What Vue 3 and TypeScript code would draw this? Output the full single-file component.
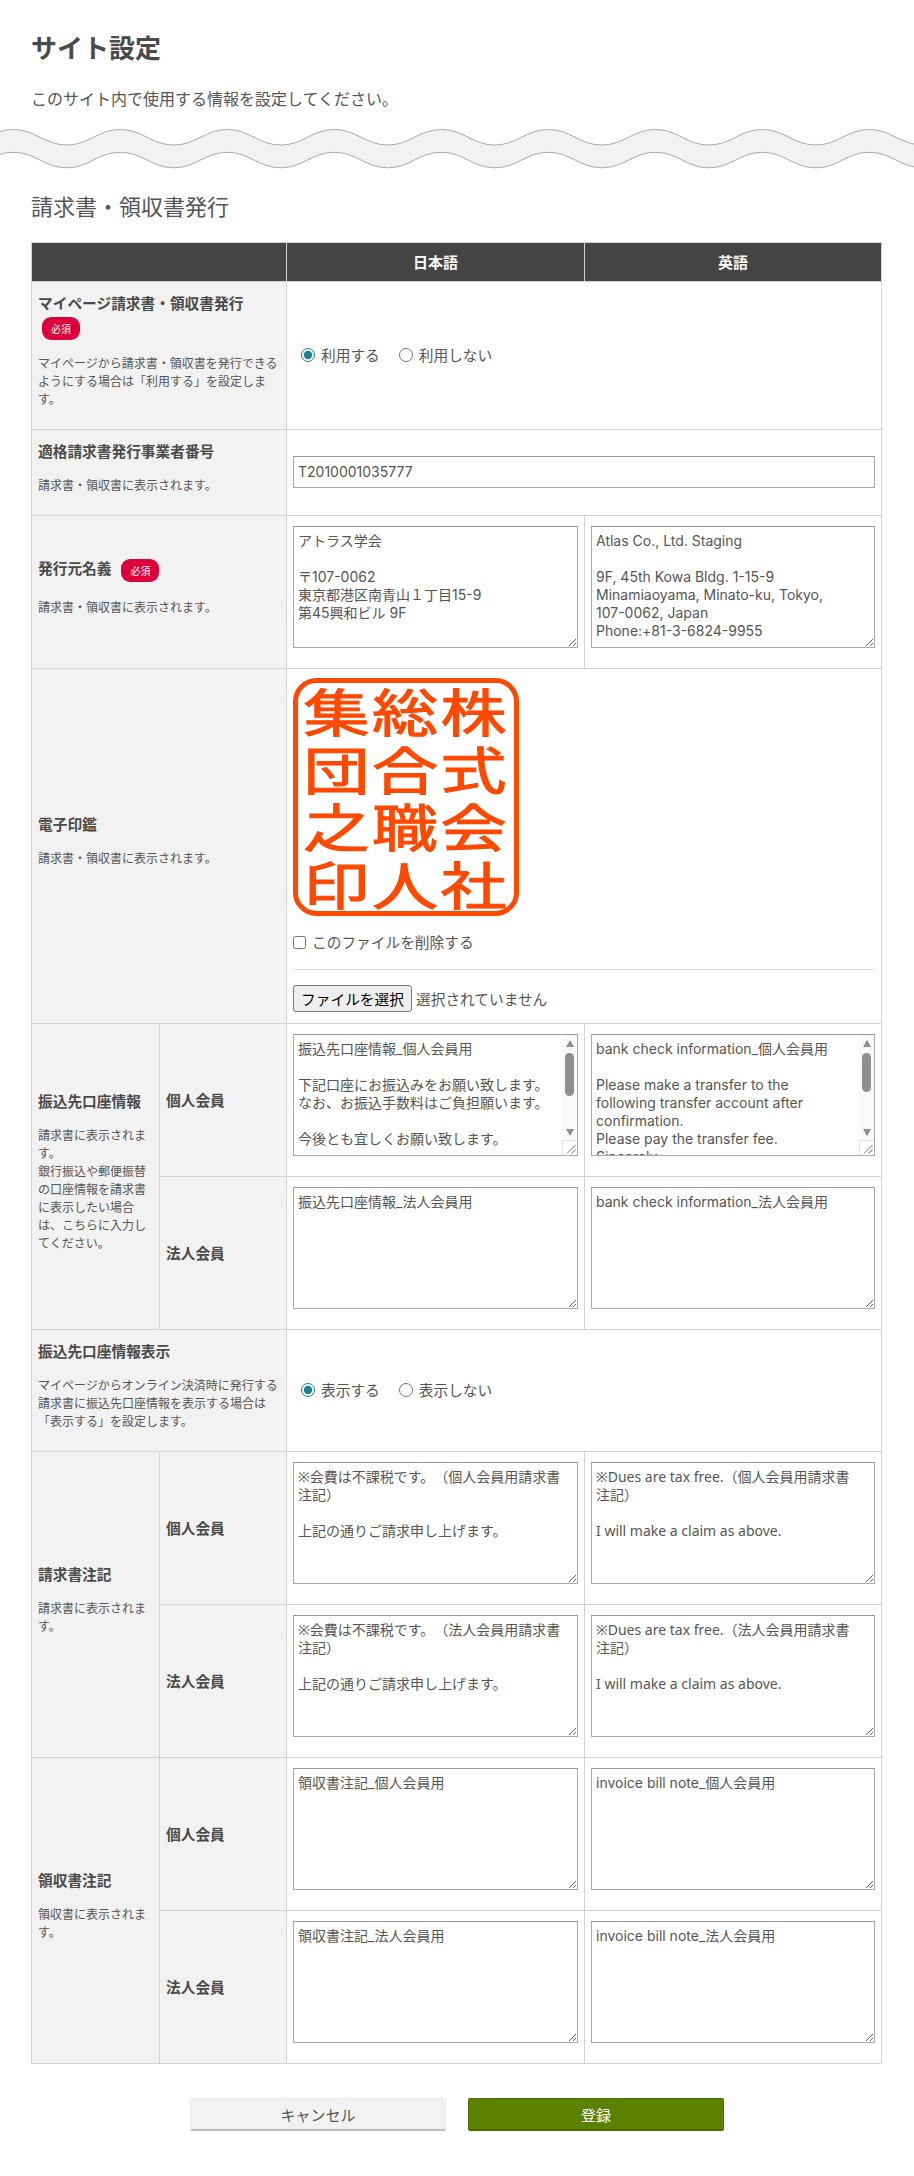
<script setup lang="ts">
import { computed } from "vue";

// wavy divider under the page intro
const wave = computed(() => {
  const half = 53.5;
  const top = 129.5;
  const bottom = 145;
  const offset = 22.8;
  let x = 13.3 - half * 2;
  let y = top;
  let up = `M${x} ${top}`;
  const steps: string[] = [];
  while (x < 1000) {
    const ny = y === top ? bottom : top;
    steps.push([x + half * 0.42, y, x + half * 0.58, ny, x + half, ny].join(" "));
    x += half;
    y = ny;
  }
  up += " C" + steps.join(" C");
  return { up, offset, end: x, last: y };
});

const fill = computed(() => {
  const w = wave.value;
  return `${w.up} L${w.end} ${w.last + 60} L-200 ${w.last + 60} Z`;
});

const seal = [
  ["集", "総", "株"],
  ["団", "合", "式"],
  ["之", "職", "会"],
  ["印", "人", "社"],
];

const bank = [
  {
    value:
      "振込先口座情報_個人会員用\n\n下記口座にお振込みをお願い致します。\nなお、お振込手数料はご負担願います。\n\n今後とも宜しくお願い致します。\n\n\n\n\n\n",
    thumb: 43,
  },
  {
    value:
      "bank check information_個人会員用\n\nPlease make a transfer to the\nfollowing transfer account after\nconfirmation.\nPlease pay the transfer fee.\nSincerely,\n\n\n\n\n\n\n\n",
    thumb: 39,
  },
];

const noteRows = [
  {
    title: "請求書注記",
    desc: "請求書に表示されます。",
    mark: true,
    rows: [
      {
        label: "個人会員",
        ja: "※会費は不課税です。（個人会員用請求書注記）\n\n上記の通りご請求申し上げます。",
        en: "※Dues are tax free.（個人会員用請求書\n注記）\n\nI will make a claim as above.",
      },
      {
        label: "法人会員",
        ja: "※会費は不課税です。（法人会員用請求書注記）\n\n上記の通りご請求申し上げます。",
        en: "※Dues are tax free.（法人会員用請求書\n注記）\n\nI will make a claim as above.",
      },
    ],
  },
  {
    title: "領収書注記",
    desc: "領収書に表示されます。",
    mark: false,
    rows: [
      { label: "個人会員", ja: "領収書注記_個人会員用", en: "invoice bill note_個人会員用" },
      { label: "法人会員", ja: "領収書注記_法人会員用", en: "invoice bill note_法人会員用" },
    ],
  },
];
</script>

<template>
  <div class="page">
    <div class="intro">
      <h1>サイト設定</h1>
      <p>このサイト内で使用する情報を設定してください。</p>
    </div>

    <svg class="wave" viewBox="0 124 914 50" width="914" height="50" aria-hidden="true">
      <path :d="fill" fill="#f2f2f2" />
      <path :d="fill" fill="#fff" :transform="`translate(0 ${wave.offset})`" />
      <path :d="wave.up" fill="none" stroke="#aaa" />
      <path :d="wave.up" fill="none" stroke="#aaa" :transform="`translate(0 ${wave.offset})`" />
    </svg>

    <h2>請求書・領収書発行</h2>

    <table class="form-table">
      <colgroup>
        <col class="c1" />
        <col class="c2" />
        <col class="c3" />
        <col class="c4" />
      </colgroup>
      <thead>
        <tr>
          <th colspan="2"></th>
          <th>日本語</th>
          <th>英語</th>
        </tr>
      </thead>
      <tbody>
        <tr class="r1">
          <th colspan="2" class="head">
            <div class="label">マイページ請求書・領収書発行</div>
            <span class="badge badge-block">必須</span>
            <div class="desc desc-tight">マイページから請求書・領収書を発行できるようにする場合は「利用する」を設定します。</div>
          </th>
          <td colspan="2" class="radios">
            <label><input type="radio" name="use" checked />利用する</label>
            <label><input type="radio" name="use" />利用しない</label>
          </td>
        </tr>
        <tr class="r2">
          <th colspan="2" class="head">
            <div class="label">適格請求書発行事業者番号</div>
            <div class="desc">請求書・領収書に表示されます。</div>
          </th>
          <td colspan="2"><input class="text" type="text" value="T2010001035777" /></td>
        </tr>
        <tr class="r3">
          <th colspan="2" class="head">
            <div class="label">発行元名義<span class="badge">必須</span></div>
            <div class="desc">請求書・領収書に表示されます。</div>
          </th>
          <td class="area"><textarea :value="'アトラス学会\n\n〒107-0062\n東京都港区南青山１丁目15-9\n第45興和ビル 9F'"></textarea></td>
          <td class="area"><textarea :value="'Atlas Co., Ltd. Staging\n\n9F, 45th Kowa Bldg. 1-15-9\nMinamiaoyama, Minato-ku, Tokyo,\n107-0062, Japan\nPhone:+81-3-6824-9955'"></textarea></td>
        </tr>
        <tr class="r4">
          <th colspan="2" class="head">
            <div class="label">電子印鑑</div>
            <div class="desc">請求書・領収書に表示されます。</div>
          </th>
          <td colspan="2" class="seal-cell">
            <svg class="seal" width="226" height="238" viewBox="0 0 226 238" role="img">
              <rect x="2.5" y="2.5" width="221" height="233" rx="21" fill="#fff" stroke="#ff4800" stroke-width="5" />
              <g v-for="(row, r) in seal" :key="r">
                <text
                  v-for="(ch, c) in row"
                  :key="ch"
                  class="seal-ch"
                  text-anchor="middle"
                  :transform="`translate(${43.5 + c * 68.5} ${54 + r * 57.5}) scale(1 0.78)`"
                >{{ ch }}</text>
              </g>
            </svg>
            <label class="check"><input type="checkbox" />このファイルを削除する</label>
            <hr />
            <div class="file">
              <button type="button">ファイルを選択</button>
              <span>選択されていません</span>
            </div>
          </td>
        </tr>
        <tr class="r5">
          <th rowspan="2" class="head">
            <div class="label">振込先口座情報</div>
            <div class="desc">請求書に表示されます。<br />銀行振込や郵便振替の口座情報を請求書に表示したい場合は、こちらに入力してください。</div>
          </th>
          <th class="sub">個人会員</th>
          <td v-for="item in bank" :key="item.thumb" class="area">
            <div class="scroll-box">
              <textarea class="scroll" :value="item.value"></textarea>
              <div class="bar" aria-hidden="true">
                <svg class="arrow arrow-up" width="8" height="7" viewBox="0 0 8 7"><polygon points="4,0 8,7 0,7" fill="#8f8f8f" /></svg>
                <div class="thumb" :style="{ height: item.thumb + 'px' }"></div>
                <svg class="arrow arrow-down" width="8" height="7" viewBox="0 0 8 7"><polygon points="0,0 8,0 4,7" fill="#8f8f8f" /></svg>
              </div>
              <div class="corner" aria-hidden="true">
                <svg width="15" height="15" viewBox="0 0 15 15">
                  <path d="M5 13.5 L13.5 5 M9.5 13.5 L13.5 9.5" stroke="#777" fill="none" />
                </svg>
              </div>
            </div>
          </td>
        </tr>
        <tr class="r5">
          <th class="sub">法人会員</th>
          <td class="area"><textarea :value="'振込先口座情報_法人会員用'"></textarea></td>
          <td class="area"><textarea :value="'bank check information_法人会員用'"></textarea></td>
        </tr>
        <tr class="r6">
          <th colspan="2" class="head">
            <div class="label">振込先口座情報表示</div>
            <div class="desc">マイページからオンライン決済時に発行する請求書に振込先口座情報を表示する場合は「表示する」を設定します。</div>
          </th>
          <td colspan="2" class="radios">
            <label><input type="radio" name="show" checked />表示する</label>
            <label><input type="radio" name="show" />表示しない</label>
          </td>
        </tr>
        <template v-for="group in noteRows" :key="group.title">
          <tr v-for="(row, i) in group.rows" :key="row.label" class="r5">
            <th v-if="i === 0" rowspan="2" class="head">
              <div class="label">{{ group.title }}</div>
              <div class="desc">{{ group.desc }}</div>
            </th>
            <th class="sub">{{ row.label }}</th>
            <td class="area"><textarea :class="{ mark: group.mark }" :value="row.ja"></textarea></td>
            <td class="area"><textarea :class="{ mark: group.mark }" :value="row.en"></textarea></td>
          </tr>
        </template>
      </tbody>
    </table>

    <div class="actions">
      <button type="button" class="btn btn-cancel">キャンセル</button>
      <button type="button" class="btn btn-submit">登録</button>
    </div>
  </div>
</template>

<style>
html,
body {
  margin: 0;
  background: #fff;
}
</style>

<style scoped>
.page {
  width: 914px;
  height: 2176px;
  overflow: hidden;
  color: #555;
  font-family: "Noto Sans CJK JP", "Noto Sans", sans-serif;
  font-size: 14.7px;
  line-height: 18px;
  text-spacing-trim: space-all;
}
.intro {
  padding: 0 31px;
}
h1 {
  margin: 0;
  padding-top: 30px;
  font-size: 26px;
  line-height: 34px;
  font-weight: 700;
  color: #4a4a4a;
}
.intro p {
  margin: 0;
  padding-top: 23px;
  font-size: 16px;
  line-height: 22px;
}
.wave {
  display: block;
  margin-top: 15px;
}
h2 {
  margin: 0;
  padding: 16px 31px 0;
  font-size: 22px;
  line-height: 30px;
  font-weight: 400;
}

.form-table {
  margin: 22px 0 0 31px;
  width: 850px;
  table-layout: fixed;
  border-collapse: collapse;
}
.c1 {
  width: 128px;
}
.c2 {
  width: 127px;
}
.c3 {
  width: 298px;
}
.c4 {
  width: 297px;
}
.form-table th,
.form-table td {
  border: 1px solid #d2d2d2;
  padding: 0 6px;
  vertical-align: middle;
  text-align: left;
  font-weight: 400;
}
.form-table thead th {
  height: 38px;
  background: #444;
  color: #fff;
  font-weight: 700;
  font-size: 15px;
  text-align: center;
  border-color: #d2d2d2;
}
.form-table tbody th {
  background: #f2f2f2;
}
.label {
  font-weight: 700;
  color: #4a4a4a;
}
.form-table .sub {
  font-weight: 700;
  color: #4a4a4a;
}
.desc {
  margin: 16px 0 10px;
  font-size: 12px;
  line-height: 18px;
}
.desc-tight {
  margin-top: 14px;
}
.badge {
  display: inline-block;
  margin-left: 10px;
  width: 38px;
  height: 23px;
  border-radius: 9px;
  background: #dc003c;
  color: #fff;
  font-size: 10px;
  font-weight: 400;
  line-height: 23px;
  text-align: center;
  vertical-align: middle;
}
.badge-block {
  display: block;
  margin: 5px 0 0 4px;
}

.r1 {
  height: 148px;
}
.r2 {
  height: 86px;
}
.r3 {
  height: 153px;
}
.r4 {
  height: 355px;
}
.r5 {
  height: 153px;
}
.r6 {
  height: 122px;
}

.radios label {
  display: inline-flex;
  align-items: center;
  margin-right: 11px;
  color: #555;
}
.radios input {
  width: 14px;
  height: 14px;
  margin: 0 6px 0 8px;
  accent-color: #1f7f93;
}

.text {
  display: block;
  box-sizing: border-box;
  width: 100%;
  height: 32px;
  padding: 0 4px;
  border: 1px solid #aaa;
  border-top-color: #999;
  border-radius: 0;
  color: #555;
  font: 14px Inter, "Noto Sans CJK JP", sans-serif;
  outline: none;
}
.form-table .r2 td {
  padding-bottom: 2px;
}
.form-table .area {
  padding: 10px 6px 20px;
}
.area textarea {
  display: block;
  box-sizing: border-box;
  width: 100%;
  height: 122px;
  margin: 0;
  padding: 5px 4px;
  border: 1px solid #aaa;
  border-top-color: #999;
  border-radius: 0;
  color: #555;
  font: 14px/18px Inter, "Noto Sans CJK JP", sans-serif;
  text-spacing-trim: space-all;
  outline: none;
  resize: vertical;
}
/* Inter has its own small reference mark, Noto Sans falls through to the CJK one */
.area textarea.mark {
  font-family: "Noto Sans", "Noto Sans CJK JP", sans-serif;
}

/* the headless browser hides real scrollbars, so this one is painted on top */
.scroll-box {
  position: relative;
}
.area textarea.scroll {
  overflow: hidden;
  padding-right: 20px;
}
.bar {
  position: absolute;
  top: 1px;
  right: 1px;
  bottom: 16px;
  width: 15px;
  background: #fafafa;
}
.arrow {
  position: absolute;
  left: 4px;
}
.arrow-up {
  top: 5px;
}
.arrow-down {
  top: 94px;
}
.thumb {
  position: absolute;
  top: 18px;
  left: 3px;
  width: 9px;
  border-radius: 5px;
  background: #8f8f8f;
}
.corner {
  position: absolute;
  right: 1px;
  bottom: 1px;
  width: 15px;
  height: 15px;
  box-sizing: border-box;
  background: #fff;
  border-left: 1px solid #e5e5e5;
  border-top: 1px solid #e5e5e5;
}
.corner svg {
  position: absolute;
  right: 0;
  bottom: 0;
}

.form-table .seal-cell {
  padding: 9px 6px 10px;
  vertical-align: top;
}
.seal {
  display: block;
  overflow: visible;
}
.seal-ch {
  fill: #ff4800;
  stroke: #ff4800;
  stroke-width: 1.4px;
  font-family: "Noto Sans CJK JP", sans-serif;
  font-size: 66px;
  font-weight: 400;
}
.check {
  display: flex;
  align-items: center;
  margin-top: 17px;
  color: #555;
}
.check input {
  width: 13px;
  height: 13px;
  margin: 0 6px 0 0;
}
hr {
  margin: 18px 0 15px;
  border: 0;
  border-top: 1px solid #ddd;
}
.file {
  display: flex;
  align-items: center;
  gap: 4px;
}
.file button {
  box-sizing: border-box;
  width: 119px;
  height: 27px;
  padding: 0;
  background: #efefef;
  border: 1px solid #767676;
  border-radius: 3px;
  color: #000;
  font: 14.7px "Noto Sans CJK JP", sans-serif;
}

.actions {
  display: flex;
  justify-content: center;
  gap: 22px;
  margin-top: 34px;
}
.btn {
  box-sizing: border-box;
  width: 256px;
  height: 33px;
  border: 1px solid transparent;
  border-radius: 2px;
  font: 15px "Noto Sans CJK JP", sans-serif;
}
.btn-cancel {
  background: #f2f2f2;
  border-color: #ececec;
  border-bottom: 2px solid #bbb;
  color: #555;
}
.btn-submit {
  background: #5a8200;
  border-color: #4f7300;
  border-bottom: 2px solid #4a6c00;
  color: #fff;
}
</style>
